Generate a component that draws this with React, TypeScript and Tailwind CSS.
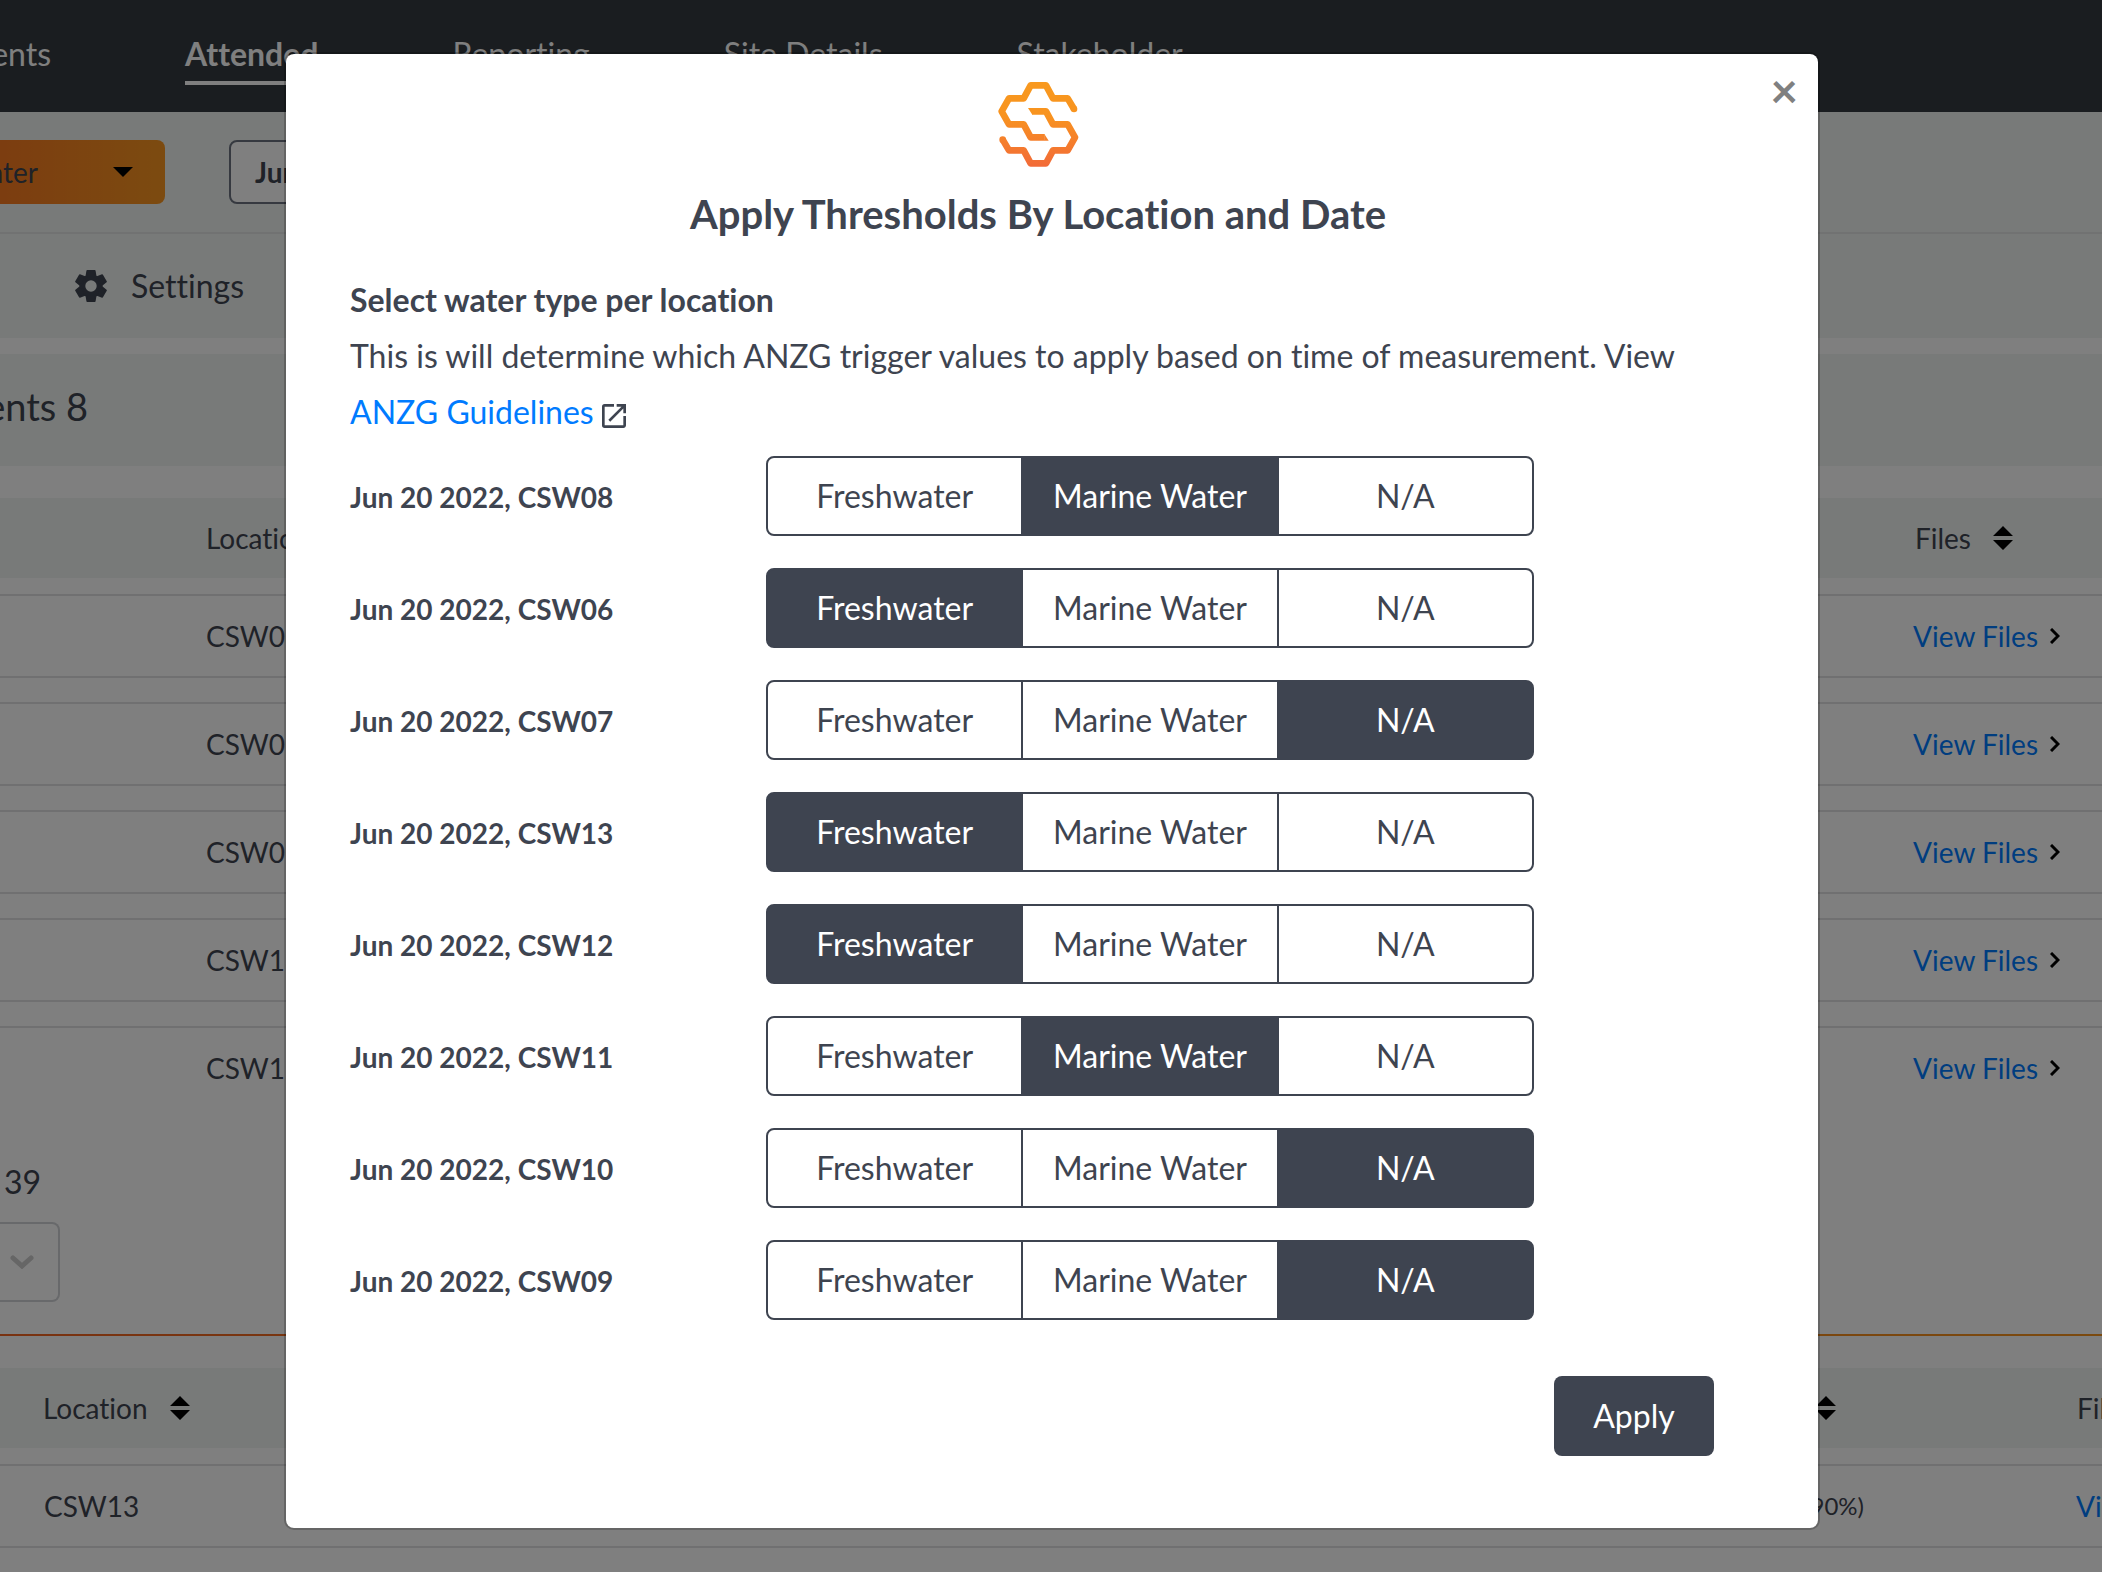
import { useState } from "react";
import { MdOpenInNew } from "react-icons/md";

const WATER_TYPES = ["Freshwater", "Marine Water", "N/A"];

const INITIAL_ROWS = [
  { location: "CSW08", type: "Marine Water" },
  { location: "CSW06", type: "Freshwater" },
  { location: "CSW07", type: "N/A" },
  { location: "CSW13", type: "Freshwater" },
  { location: "CSW12", type: "Freshwater" },
  { location: "CSW11", type: "Marine Water" },
  { location: "CSW10", type: "N/A" },
  { location: "CSW09", type: "N/A" },
];

const NAV = ["Events", "Attended", "Reporting", "Site Details", "Stakeholder"];

const EVENTS = ["CSW08", "CSW06", "CSW07", "CSW13", "CSW12"];

function Logo() {
  return (
    <svg viewBox="113 96 243 258" className="h-[86px] w-[81px]" fill="none" aria-hidden="true">
      <defs>
        <linearGradient id="brand" x1="0" y1="96" x2="0" y2="350" gradientUnits="userSpaceOnUse">
          <stop offset="0" stopColor="#f8991f" />
          <stop offset="0.4" stopColor="#f8931f" />
          <stop offset="1" stopColor="#f26a38" />
        </linearGradient>
      </defs>
      <g stroke="url(#brand)" strokeWidth="20" strokeLinejoin="round">
        <path d="M341 177L322 145H278L257 106H211L190 145H146L124 184L146 223H190L211 262H253" />
        <path d="M127 269L146 301H190L211 340H257L278 301H322L344 262L322 223H278L257 184H215" />
      </g>
      <g fill="url(#brand)">
        <circle cx="341" cy="177" r="10" />
        <circle cx="127" cy="269" r="10" />
        <path d="M252 252L265 272H252Z" />
        <path d="M216 194L203 174H216Z" />
      </g>
    </svg>
  );
}

function GearIcon() {
  return (
    <svg viewBox="-16 -16 32 32" className="size-8 shrink-0" fill="currentColor" aria-hidden="true">
      <path
        fillRule="evenodd"
        d="M0 -11.5A11.5 11.5 0 1 1 0 11.5A11.5 11.5 0 1 1 0 -11.5ZM0 -5.7A5.7 5.7 0 1 0 0 5.7A5.7 5.7 0 1 0 0 -5.7Z"
      />
      <g stroke="currentColor" strokeWidth="1.6" strokeLinejoin="round">
        {[0, 60, 120, 180, 240, 300].map((angle) => (
          <path key={angle} d="M-4.8 -9L-3.8 -15.2H3.8L4.8 -9Z" transform={`rotate(${angle})`} />
        ))}
      </g>
    </svg>
  );
}

function SortIcon() {
  return (
    <svg viewBox="0 0 20 24" className="h-6 w-5 shrink-0" fill="#000" aria-hidden="true">
      <path d="M10 0L20 10H0ZM0 14H20L10 24Z" />
    </svg>
  );
}

function ChevronRight() {
  return (
    <svg viewBox="0 0 10 16" className="h-4 w-[10px]" fill="none" stroke="#000" strokeWidth="3" aria-hidden="true">
      <path d="M1 1L8 8L1 15" />
    </svg>
  );
}

function SortHeader({ label }: { label: string }) {
  return (
    <button type="button" className="flex items-center gap-[22px] whitespace-nowrap">
      {label}
      <SortIcon />
    </button>
  );
}

function ViewFiles() {
  return (
    <a href="#files" className="flex items-center gap-3 whitespace-nowrap text-[#007bff]">
      View Files
      <ChevronRight />
    </a>
  );
}

function Page() {
  return (
    <div className="h-full overflow-hidden bg-white">
      <header className="h-28 bg-[#343a40]">
        <nav className="flex items-start gap-[134px] pt-[30px] text-[32px] leading-[48px] whitespace-nowrap text-white">
          {NAV.map((item) => (
            <a
              key={item}
              href="#nav"
              className={
                item === "Attended"
                  ? "border-b-4 border-white pb-[3px] font-bold"
                  : item === "Events"
                    ? "flex w-[51px] justify-end"
                    : ""
              }
            >
              {item}
            </a>
          ))}
        </nav>
      </header>

      <div className="flex h-[122px] gap-16 border-b-2 border-[#e2e5e4] bg-[#f1f5f3] pt-7 text-[28px]">
        <button
          type="button"
          className="flex h-16 w-[165px] items-center justify-end gap-[75px] rounded-r-lg bg-linear-to-r from-[#f97a20] to-[#f99620] pr-8 text-[#3e4450]"
        >
          Water
          <svg viewBox="0 0 20 10" className="h-[10px] w-5 shrink-0" aria-hidden="true">
            <path d="M0 0H20L10 10Z" fill="#000" />
          </svg>
        </button>
        <button
          type="button"
          className="h-16 w-[260px] rounded-lg border-2 border-[#6c7380] bg-white px-6 text-left font-bold text-[#3e4450]"
        >
          Jun 20 2022
        </button>
      </div>

      <div className="flex h-[104px] items-center bg-[#f1f5f3] pl-[75px] text-[32px] text-[#3e4450]">
        <button type="button" className="flex items-center gap-6">
          <GearIcon />
          Settings
        </button>
      </div>

      <div className="mt-4 flex h-28 items-center bg-[#f1f5f3] pb-2 text-[38px] text-[#3e4450]">
        <h2 className="flex w-[88px] justify-end whitespace-nowrap">Events 8</h2>
      </div>

      <div className="mt-8 text-[28px] text-[#3e4450]">
        <div className="flex h-20 items-center justify-between bg-[#f1f5f3] pr-[89px] pl-[206px]">
          <SortHeader label="Location" />
          <SortHeader label="Files" />
        </div>
        <div className="mt-4 flex h-[576px] flex-col gap-6 overflow-hidden">
          {EVENTS.map((name, i) => (
            <div
              key={name}
              className={
                i === EVENTS.length - 1
                  ? "flex h-[84px] shrink-0 items-center justify-between border-t-2 border-[#e0e0e3] pr-[42px] pb-0.5 pl-[206px]"
                  : "flex h-[84px] shrink-0 items-center justify-between border-y-2 border-[#e0e0e3] pr-[42px] pl-[206px]"
              }
            >
              <span>{name}</span>
              <ViewFiles />
            </div>
          ))}
        </div>
      </div>

      <div className="-mt-3 h-[58px] text-[32px] leading-[48px] text-[#3e4450]">
        <p className="flex w-[41px] justify-end whitespace-nowrap">Records 39</p>
      </div>
      <div className="mt-1.5 flex h-20 w-[60px] items-center justify-end rounded-r-lg border-y-2 border-r-2 border-[#d0d2d6] pr-6">
        <svg viewBox="0 0 24 14" className="h-[14px] w-6" fill="none" stroke="#ccc" strokeWidth="5" strokeLinecap="round" aria-hidden="true">
          <path d="M3 3L12 11L21 3" />
        </svg>
      </div>

      <div className="mt-8 h-0.5 bg-linear-to-r from-[#f26522] to-[#f7941e]" />

      <div className="mt-8 text-[28px] text-[#3e4450]">
        <div className="flex h-20 items-center bg-[#f1f5f3] pl-[43px]">
          <SortHeader label="Location" />
          <div className="ml-auto flex w-[286px] items-center">
            <SortIcon />
            <div className="ml-auto w-[25px] overflow-hidden">
              <SortHeader label="Files" />
            </div>
          </div>
        </div>
        <div className="mt-4 flex h-[84px] items-center border-y-2 border-[#e0e0e3] pl-11">
          <span>CSW13</span>
          <span className="ml-auto text-[24px]">(90%)</span>
          <div className="ml-[212px] w-[26px] overflow-hidden">
            <ViewFiles />
          </div>
        </div>
      </div>
    </div>
  );
}

function WaterTypeRow({ location, initial }: { location: string; initial: string }) {
  const [selected, setSelected] = useState(initial);
  return (
    <div className="flex items-center" role="group" aria-label={location}>
      <div className="w-[416px] shrink-0 pt-0.5 text-[28px] font-bold">Jun 20 2022, {location}</div>
      <div className="flex h-20 w-[768px]">
        {WATER_TYPES.map((type) => (
          <button
            key={type}
            type="button"
            aria-pressed={type === selected}
            onClick={() => setSelected(type)}
            className={
              type === selected
                ? "-ml-0.5 flex-1 border-2 border-[#3e4450] bg-[#3e4450] text-[32px] text-white first:ml-0 first:rounded-l-lg last:rounded-r-lg"
                : "-ml-0.5 flex-1 border-2 border-[#3e4450] bg-white text-[32px] text-[#3e4450] first:ml-0 first:rounded-l-lg last:rounded-r-lg"
            }
          >
            {type}
          </button>
        ))}
      </div>
    </div>
  );
}

function ThresholdsModal() {
  return (
    <div
      role="dialog"
      aria-modal="true"
      aria-labelledby="thresholds-title"
      className="relative w-[1536px] rounded-[10px] border-2 border-black/20 bg-white bg-clip-padding pt-7 pr-[92px] pb-[72px] pl-16 text-[#3e4450]"
    >
      <button
        type="button"
        aria-label="Close"
        className="absolute top-3 right-5 text-[48px] leading-[48px] font-bold text-[#808080]"
      >
        ×
      </button>
      <div className="flex justify-center">
        <Logo />
      </div>
      <h1 id="thresholds-title" className="mt-4 text-center text-[40px] leading-[60px] font-bold">
        Apply Thresholds By Location and Date
      </h1>
      <div className="mt-7 text-[32px] leading-[56px]">
        <h2 className="font-bold">Select water type per location</h2>
        <p>
          This is will determine which ANZG trigger values to apply based on time of measurement. View{" "}
          <a href="#guidelines" className="text-[#007bff]">
            ANZG Guidelines
          </a>
          <MdOpenInNew className="ml-1 inline size-8 align-middle" aria-hidden="true" />
        </p>
      </div>
      <div className="mt-4 flex flex-col gap-8">
        {INITIAL_ROWS.map((row) => (
          <WaterTypeRow key={row.location} location={row.location} initial={row.type} />
        ))}
      </div>
      <div className="mt-14 flex justify-end pr-3">
        <button type="button" className="h-20 w-40 rounded-lg bg-[#3e4450] text-[32px] text-white">
          Apply
        </button>
      </div>
    </div>
  );
}

export default function App() {
  return (
    <div className="relative h-screen overflow-hidden font-[Lato,sans-serif] [font-variant-ligatures:none]">
      <Page />
      <div className="absolute inset-0 flex items-start justify-center bg-black/50 pt-[52px] pl-0.5">
        <ThresholdsModal />
      </div>
    </div>
  );
}
